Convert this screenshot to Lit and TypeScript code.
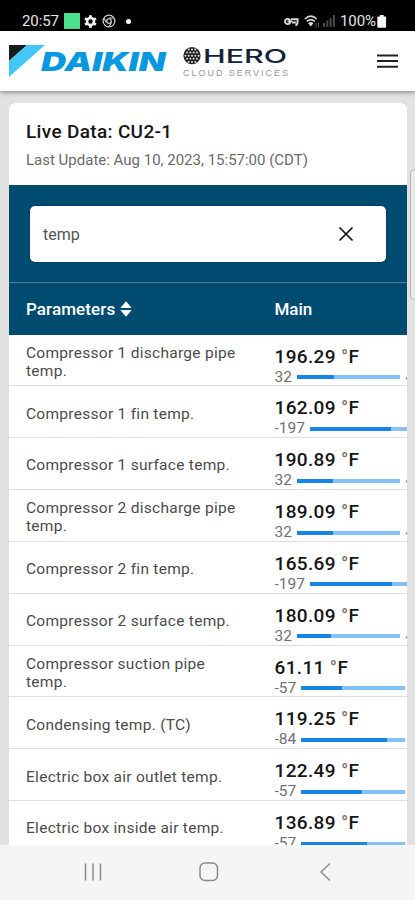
import { LitElement, html, css, svg, nothing } from "lit";
import { customElement, property } from "lit/decorators.js";

interface Reading {
  name: string;
  value: string;
  min: string;
  fill: number;
  max?: string;
}

const READINGS: Reading[] = [
  { name: "Compressor 1 discharge pipe temp.", value: "196.29", min: "32", fill: 36, max: "493" },
  { name: "Compressor 1 fin temp.", value: "162.09", min: "-197", fill: 78.5 },
  { name: "Compressor 1 surface temp.", value: "190.89", min: "32", fill: 35, max: "493" },
  { name: "Compressor 2 discharge pipe temp.", value: "189.09", min: "32", fill: 34.5, max: "493" },
  { name: "Compressor 2 fin temp.", value: "165.69", min: "-197", fill: 79.5 },
  { name: "Compressor 2 surface temp.", value: "180.09", min: "32", fill: 32.5, max: "493" },
  { name: "Compressor suction pipe temp.", value: "61.11", min: "-57", fill: 39 },
  { name: "Condensing temp. (TC)", value: "119.25", min: "-84", fill: 82.5 },
  { name: "Electric box air outlet temp.", value: "122.49", min: "-57", fill: 59 },
  { name: "Electric box inside air temp.", value: "136.89", min: "-57", fill: 64 },
];

@customElement("phone-status")
export class PhoneStatus extends LitElement {
  static styles = css`
    :host {
      display: flex;
      box-sizing: border-box;
      height: 31px;
      flex: none;
      background: #000;
      color: #e6e6e6;
      font: 400 15px/18px Roboto, sans-serif;
      padding: 12px 28.5px 0 22px;
      justify-content: space-between;
    }
    .side { display: flex; height: 18px; align-items: center; }
    .clock { width: 42px; letter-spacing: -0.1px; white-space: nowrap; }
    .app { width: 15.5px; height: 15.5px; background: #4be08c; }
    svg { display: block; }
    .gear { margin-left: 4px; }
    .chrome { margin-left: 5px; }
    .dot { width: 5px; height: 5px; border-radius: 50%; background: #fff; margin-left: 10.5px; }
    .wifi { margin-left: 5px; }
    .signal { margin-left: 3px; }
    .charge { margin-left: 5px; width: 35.5px; letter-spacing: -0.1px; }
    .battery { margin-left: 1.5px; }
  `;
  render() {
    return html`
      <div class="side">
        <span class="clock">20:57</span>
        <span class="app"></span>
        <svg class="gear" width="13" height="13" viewBox="-6.5 -6.5 13 13">
          <circle r="3.5" fill="none" stroke="#f4f4f4" stroke-width="2.6" />
          ${[0, 60, 120, 180, 240, 300].map(
            (a) => svg`<rect x="-1.4" y="-6.3" width="2.8" height="2.6" fill="#f4f4f4" transform="rotate(${a})" />`
          )}
        </svg>
        <svg class="chrome" width="14" height="14" viewBox="-7 -7 14 14" fill="none" stroke="#d0d0d0">
          <circle r="5.9" stroke-width="1.2" />
          <circle r="2.3" stroke-width="1.3" />
          <path d="M0-3H5M-2.6 1.5-5-3M2.6 1.5 0 5.5" stroke-width="1.1" />
        </svg>
        <span class="dot"></span>
      </div>
      <div class="side">
        <svg width="15" height="12" viewBox="0 0 15 12" fill="none" stroke="#d8d8d8">
          <circle cx="3.6" cy="6.5" r="2.6" stroke-width="1.8" />
          <path d="M3.5 6.5h4.5" stroke-width="2" />
          <path d="M7 4.2h6.6v2.6q0 3.2-2.2 3.4M8 7.6h4" stroke-width="2" />
        </svg>
        <svg class="wifi" width="16" height="13" viewBox="0 0 16 13" fill="none" stroke="#d4d4d4">
          <path d="M.8 4Q6.8-1.6 12.8 4M2.8 6.4Q6.8 2.8 10.8 6.4" stroke-width="1.6" />
          <path d="M4.2 8.2Q6.8 5.8 9.4 8.2L6.8 11.5Z" fill="#ddd" stroke="none" />
          <path d="M12 7.5v5M14.5 7.5v5" stroke="#555" />
        </svg>
        <svg class="signal" width="12" height="12" viewBox="0 0 12 12" fill="#4a4a4a">
          <path d="M0 8h2v4H0zM3.3 5.5h2V12h-2zM6.6 3h2v9h-2zM9.9 0h2v12h-2z" />
        </svg>
        <span class="charge">100%</span>
        <svg class="battery" width="9.5" height="13" viewBox="0 0 9.5 13" fill="#f7f7f7">
          <rect x="2.9" y="0" width="3.8" height="3" />
          <rect x="0.3" y="1.5" width="8.8" height="11.3" rx="1" />
        </svg>
      </div>
    `;
  }
}

@customElement("brand-bar")
export class BrandBar extends LitElement {
  static styles = css`
    :host {
      display: flex;
      box-sizing: border-box;
      height: 60px;
      flex: none;
      background: #fff;
      box-shadow: 0 1px 5px rgba(0, 0, 0, 0.45);
      position: relative;
      z-index: 1;
      justify-content: space-between;
      padding: 0 17px 0 0;
    }
    svg { display: block; }
    .daikin { font: italic 900 26px Inter, sans-serif; }
    .hero { font: 500 18.5px Inter, sans-serif; }
    .cloud { font: 9px "Liberation Sans", sans-serif; }
    .menu { margin-top: 22px; }
  `;
  render() {
    const panels: [number, number][] = [];
    for (let r = -2; r <= 2; r++)
      for (let c = -2; c <= 2; c++) {
        const x = c * 3.3 + (r % 2 ? 1.65 : 0);
        if (Math.hypot(x, r * 3.1) < 7.6) panels.push([x, r * 3.1]);
      }
    return html`
      <svg width="300" height="60" viewBox="0 31 300 60">
        <path d="M9 45H27L9 61Z" fill="#191b1d" />
        <path d="M27 45H45L9 77V61Z" fill="#44c7f4" />
        <text class="daikin" x="41" y="70.7" textLength="124.5" lengthAdjust="spacingAndGlyphs" fill="#0798df">DAIKIN</text>
        <g transform="translate(192 55.7)">
          <circle r="8.6" fill="#1e2226" />
          ${panels.map(([x, y]) => svg`<circle cx=${x} cy=${y} r="1" fill="#dfe0e2" />`)}
        </g>
        <text class="hero" x="203" y="62.6" textLength="84" lengthAdjust="spacingAndGlyphs" fill="#13223a">HERO</text>
        <text class="cloud" x="183" y="75.5" textLength="105" fill="#97979c">CLOUD SERVICES</text>
      </svg>
      <svg class="menu" width="21" height="16" viewBox="0 0 21 16" stroke="#222" stroke-width="2">
        <path d="M0 2.5H21M0 8H21M0 13.8H21" />
      </svg>
    `;
  }
}

@customElement("reading-row")
export class ReadingRow extends LitElement {
  @property({ attribute: false }) reading!: Reading;
  static styles = css`
    :host {
      display: grid;
      grid-template-columns: 265.5px 1fr;
      box-sizing: border-box;
      height: 51.85px;
      flex: none;
      border-bottom: 1.5px solid #dedede;
      overflow: hidden;
    }
    .name {
      align-self: center;
      padding: 4px 28px 0 17px;
      color: #4b4b4b;
      font-size: 15.5px;
      line-height: 18.3px;
      letter-spacing: 0.28px;
    }
    .data { overflow: hidden; padding-top: 11px; }
    .value { font-weight: 500; font-size: 19px; line-height: 22px; letter-spacing: 0.35px; color: #161616; white-space: nowrap; }
    .unit { color: #777; }
    .range { display: flex; align-items: center; gap: 5px; font-size: 15.5px; line-height: 19px; color: #707070; white-space: nowrap; }
    .track { flex: none; width: 103.5px; height: 4px; background: #84c1f7; }
    .fill { height: 100%; background: #1686e6; }
  `;
  render() {
    const r = this.reading;
    return html`
      <div class="name">${r.name}</div>
      <div class="data">
        <div class="value">${r.value} <span class="unit">°</span>F</div>
        <div class="range">
          <span>${r.min}</span>
          <div class="track"><div class="fill" style="width:${r.fill}%"></div></div>
          ${r.max ? html`<span>${r.max}</span>` : nothing}
        </div>
      </div>
    `;
  }
}

@customElement("app-root")
export class AppRoot extends LitElement {
  static styles = css`
    :host {
      display: flex;
      flex-direction: column;
      height: 900px;
      overflow: hidden;
      background: #e2e2e2;
      font-family: Roboto, sans-serif;
      position: relative;
    }
    .page { flex: 1; min-height: 0; overflow: hidden; padding: 12px 8px 0 9px; }
    .card { background: #fff; border-radius: 7px 7px 0 0; overflow: hidden; display: flex; flex-direction: column; }
    .heading { height: 82px; box-sizing: border-box; padding: 17px 17px 0; flex: none; }
    .title { font-weight: 500; font-size: 19px; line-height: 24px; letter-spacing: 0.33px; color: #151515; }
    .updated { margin-top: 7px; font-size: 15px; line-height: 18px; color: #6a6a6a; }
    .search { background: #004c70; padding: 21px 21px; height: 98px; box-sizing: border-box; border-bottom: 1px solid #4d7b98; flex: none; }
    .field {
      height: 56px; box-sizing: border-box; background: #fff; border-radius: 5px;
      box-shadow: 0 0 2px #002455;
      display: flex; align-items: center; justify-content: space-between;
      padding: 0 32px 0 13px; font-size: 16px; color: #555;
    }
    .columns { height: 51.5px; flex: none; background: #004c70; color: #fff; display: grid; grid-template-columns: 265.5px 1fr; align-items: center; font-weight: 500; font-size: 17px; }
    .sortable { padding-left: 17px; display: flex; align-items: center; gap: 5px; letter-spacing: 0.1px; }
    .scroll { position: absolute; left: 410px; top: 169px; width: 12px; height: 131px; box-sizing: border-box; border: 1px solid #b5b5b5; border-radius: 5px; background: #ececec; }
    .nav { height: 55px; flex: none; background: #f5f5f5; }
    svg { display: block; }
  `;
  render() {
    return html`
      <phone-status></phone-status>
      <brand-bar></brand-bar>
      <main class="page">
        <section class="card">
          <div class="heading">
            <div class="title">Live Data: CU2-1</div>
            <div class="updated">Last Update: Aug 10, 2023, 15:57:00 (CDT)</div>
          </div>
          <div class="search">
            <div class="field">
              <span>temp</span>
              <svg width="16" height="16" viewBox="0 0 16 16" stroke="#111" stroke-width="1.7"><path d="M1.5 1.5l13 13M14.5 1.5l-13 13" /></svg>
            </div>
          </div>
          <div class="columns">
            <div class="sortable">
              Parameters
              <svg width="12" height="16" viewBox="0 0 12 16" fill="#fff"><path d="M6 .3 11.7 6.9H.3ZM6 15.7 11.7 9.1H.3Z" /></svg>
            </div>
            <div>Main</div>
          </div>
          ${READINGS.map((r) => html`<reading-row .reading=${r}></reading-row>`)}
        </section>
      </main>
      <div class="scroll"></div>
      <nav class="nav">
        <svg width="415" height="55" viewBox="0 0 415 55" fill="none" stroke="#8b8b8b" stroke-width="1.5">
          <path d="M85.5 18.5v17M93 18.5v17M100.5 18.5v17" />
          <rect x="200" y="18" width="17.5" height="17.5" rx="5" />
          <path d="M330 18.5 321 27l9 8.5" />
        </svg>
      </nav>
    `;
  }
}
